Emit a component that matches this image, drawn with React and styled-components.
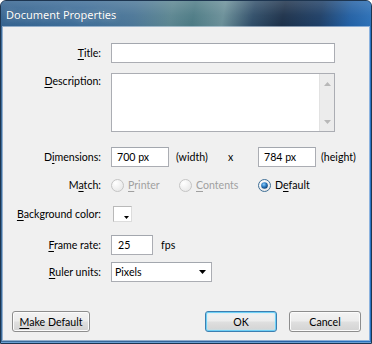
import React from 'react'
import styled, { createGlobalStyle } from 'styled-components'

const GlobalStyle = createGlobalStyle`
  html, body {
    margin: 0;
    padding: 0;
    background: #ffffff;
  }
  body {
    font-family: Lato, "Noto Sans", "Liberation Sans", sans-serif;
    font-size: 10.6px;
    color: #000;
  }
`

const Frame = styled.div`
  width: 372px;
  height: 344px;
  box-sizing: border-box;
  display: flex;
  flex-direction: column;
  border: 1px solid #1d3550;
  border-radius: 6px 6px 0 0;
  padding: 0 2px 3px;
  background: linear-gradient(90deg, #3d6c9b 0%, #36659a 45%, #2a62a6 80%, #2a74c4 100%);
  box-shadow: inset 0 -1px 0 #6aa0d4;
  overflow: hidden;
`

const TitleBar = styled.div`
  height: 26px;
  flex: none;
  display: flex;
  align-items: center;
  padding-left: 5px;
  margin: 0 -2px;
  color: #ffffff;
  font-family: "Noto Sans", "Open Sans", sans-serif;
  font-size: 11px;
  text-shadow: 0 0 6px rgba(255, 255, 255, 0.45), 0 0 1px rgba(0, 30, 60, 0.6);
  background:
    linear-gradient(180deg, rgba(255, 255, 255, 0.16) 0%, rgba(255, 255, 255, 0.04) 55%, rgba(0, 0, 0, 0) 100%),
    linear-gradient(100deg, #33628f 0%, #3e6d98 22%, #4b7697 36%, #5b8590 46%, #4c7a84 52%, #6a8f98 60%, #2f4d68 68%, #1c3049 76%, #1d3e66 86%, #215fa3 94%, #2b70b8 100%);
`

const Client = styled.div`
  flex: 1;
  display: flex;
  flex-direction: column;
  background: #f0f0f0;
  box-shadow: 0 0 0 1px rgba(220, 232, 245, 0.55);
`

const Form = styled.div`
  display: flex;
  flex-direction: column;
  padding-top: 16px;
`

const Row = styled.div`
  display: grid;
  grid-template-columns: 98px auto;
  column-gap: 10px;
  align-items: ${({ $top }) => ($top ? 'start' : 'center')};
  margin-top: ${({ $mt }) => $mt || 0}px;
  height: ${({ $h }) => $h}px;
`

const Label = styled.div`
  justify-self: end;
  white-space: nowrap;
  padding-top: ${({ $pt }) => $pt || 0}px;
`

const U = styled.span`
  text-decoration: underline;
  text-underline-offset: 2px;
`

const Line = styled.div`
  display: flex;
  align-items: center;
`

const TextBox = styled.div`
  box-sizing: border-box;
  width: ${({ $w }) => $w}px;
  height: ${({ $h }) => $h || 20}px;
  background: #ffffff;
  border: 1px solid #abadb3;
  border-top-color: #a3a7ae;
  display: flex;
  align-items: center;
  padding-left: ${({ $pl }) => $pl || 5}px;
  white-space: nowrap;
`

const TextArea = styled.div`
  box-sizing: border-box;
  width: 224px;
  height: 59px;
  background: #ffffff;
  border: 1px solid #abadb3;
  display: flex;
  justify-content: flex-end;
`

const ScrollBar = styled.div`
  width: 15px;
  height: 100%;
  box-sizing: border-box;
  background: #ececec;
  border-left: 1px solid #e2e2e2;
  display: flex;
  flex-direction: column;
  justify-content: space-between;
  align-items: center;
  padding: 8px 0 7px;
`

const Text = styled.span`
  white-space: nowrap;
  width: ${({ $w }) => ($w ? `${$w}px` : 'auto')};
  margin-left: ${({ $ml }) => $ml || 0}px;
`

const RadioOption = styled.div`
  display: flex;
  align-items: center;
  gap: 4px;
  width: ${({ $w }) => ($w ? `${$w}px` : 'auto')};
  color: ${({ $disabled }) => ($disabled ? '#a0a0a0' : '#000')};
  white-space: nowrap;
`

const Swatch = styled.div`
  position: relative;
  box-sizing: border-box;
  width: 19px;
  height: 16px;
  margin-left: 2px;
  background: #ffffff;
  border: 1px solid #b9b9b9;
  border-right-color: #dcdcdc;
  border-bottom-color: #dcdcdc;
`

const SwatchArrow = styled.svg`
  position: absolute;
  right: 2px;
  bottom: 2px;
`

const Select = styled(TextBox)`
  justify-content: space-between;
  padding: 0 5px 0 3px;
`

const Footer = styled.div`
  margin-top: auto;
  display: flex;
  align-items: center;
  padding: 0 8px 8px 9px;
`

const Button = styled.div`
  box-sizing: border-box;
  width: ${({ $w }) => $w}px;
  height: 21px;
  margin-left: ${({ $ml }) => $ml || 0}px;
  display: flex;
  align-items: center;
  justify-content: center;
  border: 1px solid ${({ $default }) => ($default ? '#3c7fb1' : '#8d8d8d')};
  border-radius: 3px;
  background: linear-gradient(180deg, #f3f3f3 0%, #ececec 48%, #dfdfdf 52%, #d3d3d3 100%);
  box-shadow: ${({ $default }) =>
    $default ? 'inset 0 0 0 1px #6fd0f6, inset 0 0 2px 1px #b6ecfc' : 'inset 0 0 0 1px #fbfbfb'};
  white-space: nowrap;
`

const Radio = ({ checked, disabled }) => (
  <svg width="13" height="13" viewBox="0 0 13 13">
    <defs>
      <radialGradient id="rbg" cx="0.35" cy="0.3" r="0.8">
        <stop offset="0" stopColor="#ffffff" />
        <stop offset="1" stopColor={disabled ? '#e6e6e6' : '#d4dbe2'} />
      </radialGradient>
      <radialGradient id="rdot" cx="0.4" cy="0.35" r="0.7">
        <stop offset="0" stopColor="#8cd0ff" />
        <stop offset="0.5" stopColor="#2c7ac0" />
        <stop offset="1" stopColor="#0b3a6c" />
      </radialGradient>
    </defs>
    <circle cx="6.5" cy="6.5" r="6" fill="url(#rbg)" stroke={disabled ? '#c4c4c4' : '#3f6f96'} />
    {checked && <circle cx="6.5" cy="6.5" r="3.3" fill="url(#rdot)" />}
  </svg>
)

const Arrow = ({ up, color = '#b8b8b8', w = 7 }) => (
  <svg width={w} height="4" viewBox={`0 0 ${w} 4`}>
    <polygon points={up ? `0,4 ${w},4 ${w / 2},0` : `0,0 ${w},0 ${w / 2},4`} fill={color} />
  </svg>
)

export default function App() {
  return (
    <>
      <GlobalStyle />
      <Frame>
        <TitleBar>Document Properties</TitleBar>
        <Client>
          <Form>
            <Row $h={20}>
              <Label><U>T</U>itle:</Label>
              <TextBox $w={224} />
            </Row>

            <Row $top $mt={10} $h={59}>
              <Label $pt={2}><U>D</U>escription:</Label>
              <TextArea>
                <ScrollBar>
                  <Arrow up />
                  <Arrow />
                </ScrollBar>
              </TextArea>
            </Row>

            <Row $mt={15} $h={20}>
              <Label>D<U>i</U>mensions:</Label>
              <Line>
                <TextBox $w={58}>700 px</TextBox>
                <Text $w={52} $ml={7}>(width)</Text>
                <Text $w={30}>x</Text>
                <TextBox $w={58}>784 px</TextBox>
                <Text $ml={5}>(height)</Text>
              </Line>
            </Row>

            <Row $mt={10} $h={16}>
              <Label>M<U>a</U>tch:</Label>
              <Line>
                <RadioOption $w={68} $disabled>
                  <Radio disabled />
                  <span><U>P</U>rinter</span>
                </RadioOption>
                <RadioOption $w={79} $disabled>
                  <Radio disabled />
                  <span><U>C</U>ontents</span>
                </RadioOption>
                <RadioOption>
                  <Radio checked />
                  <span>D<U>e</U>fault</span>
                </RadioOption>
              </Line>
            </Row>

            <Row $mt={13} $h={16}>
              <Label><U>B</U>ackground color:</Label>
              <Line>
                <Swatch>
                  <SwatchArrow width="5" height="3" viewBox="0 0 5 3">
                    <polygon points="0,0 5,0 2.5,3" fill="#000" />
                  </SwatchArrow>
                </Swatch>
              </Line>
            </Row>

            <Row $mt={13} $h={20}>
              <Label><U>F</U>rame rate:</Label>
              <Line>
                <TextBox $w={42} $pl={6}>25</TextBox>
                <Text $ml={8}>fps</Text>
              </Line>
            </Row>

            <Row $mt={7} $h={20}>
              <Label><U>R</U>uler units:</Label>
              <Select $w={101}>
                <span>Pixels</span>
                <Arrow color="#000" w={7} />
              </Select>
            </Row>
          </Form>

          <Footer>
            <Button $w={78}><U>M</U>ake Default</Button>
            <Button $w={72} $ml={115} $default>OK</Button>
            <Button $w={72} $ml={12}>Cancel</Button>
          </Footer>
        </Client>
      </Frame>
    </>
  )
}
